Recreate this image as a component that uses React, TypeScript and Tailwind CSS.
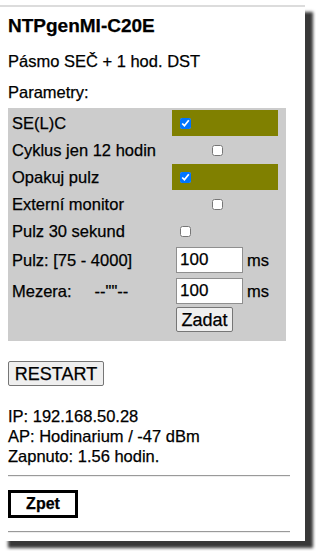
import React from 'react';

const font = { fontFamily: '"Liberation Sans", Arial, sans-serif' };

const Check: React.FC<{ checked?: boolean; className?: string }> = ({ checked, className }) => (
  <input
    type="checkbox"
    defaultChecked={checked}
    className={`m-0 h-[11px] w-[11px] ${className ?? ''}`}
  />
);

const Label: React.FC<{ children: React.ReactNode }> = ({ children }) => (
  <div className="flex items-center pl-[2px] whitespace-nowrap">{children}</div>
);

const App: React.FC = () => {
  return (
    <div className="min-h-[551px] bg-white pt-[5px] text-black [-webkit-text-stroke:0.25px_black]" style={font}>
      <div className="flex h-[536px] w-[305px] flex-col border-t-2 border-[#dcdcdc] bg-white pl-[8px] pt-[8px] shadow-[8px_7px_3px_rgba(0,0,0,0.78)]">
        <h1 className="text-[19px] font-bold leading-[22px]">NTPgenMI-C20E</h1>
        <p className="mt-[14px] text-[16.5px] leading-[20px]">Pásmo SEČ + 1 hod. DST</p>
        <p className="mt-[11px] text-[16.5px] leading-[20px]">Parametry:</p>

        <div className="mt-[6px] grid w-[278px] grid-cols-[160px_73px_31px] grid-rows-[26px_26px_26px_26px_26px_30px_30px_28px] gap-x-[2px] gap-y-[1px] bg-[#cccccc] pb-[6px] pl-[2px] pt-[2px] text-[16.5px] leading-[20px]">
          <Label>SE(L)C</Label>
          <div className="col-span-2 flex items-center bg-[#808000] pl-[8px]">
            <Check checked />
          </div>

          <Label>Cyklus jen 12 hodin</Label>
          <div className="col-span-2 flex items-center pl-[40px]">
            <Check />
          </div>

          <Label>Opakuj pulz</Label>
          <div className="col-span-2 flex items-center bg-[#808000] pl-[8px]">
            <Check checked />
          </div>

          <Label>Externí monitor</Label>
          <div className="col-span-2 flex items-center pl-[40px]">
            <Check />
          </div>

          <Label>Pulz 30 sekund</Label>
          <div className="col-span-2 flex items-center pl-[8px]">
            <Check />
          </div>

          <Label>Pulz: [75 - 4000]</Label>
          <div className="flex items-center pl-[4px]">
            <input
              defaultValue="100"
              className="h-[26px] w-[67px] border border-[#8f8f8f] bg-white px-[3px] text-[17px] outline-none"
            />
          </div>
          <div className="flex items-center">ms</div>

          <Label>
            Mezera:<span className="ml-[23px]">--""--</span>
          </Label>
          <div className="flex items-center pl-[4px]">
            <input
              defaultValue="100"
              className="h-[26px] w-[67px] border border-[#8f8f8f] bg-white px-[3px] text-[17px] outline-none"
            />
          </div>
          <div className="flex items-center">ms</div>

          <div />
          <div className="flex items-start pl-[4px]">
            <button className="h-[25px] w-[57px] rounded-[2px] border border-[#767676] bg-[#efefef] text-[18px] leading-[20px]">
              Zadat
            </button>
          </div>
          <div />
        </div>

        <button className="mt-[20px] h-[25px] w-[96px] rounded-[2px] border border-[#767676] bg-[#efefef] text-[18px] leading-[20px]">
          RESTART
        </button>

        <div className="mt-[20px] text-[16.5px] leading-[20px]">
          <p>IP: 192.168.50.28</p>
          <p>AP: Hodinarium / -47 dBm</p>
          <p>Zapnuto: 1.56 hodin.</p>
        </div>

        <div className="mt-[9px] w-[282px] border-b border-t border-b-[#eeeeee] border-t-[#9a9a9a]" />

        <button className="mt-[13px] h-[28px] w-[70px] border-[3px] border-black bg-white text-[16px] font-bold leading-[20px]">
          Zpet
        </button>

        <div className="mt-[13px] w-[282px] border-b border-t border-b-[#eeeeee] border-t-[#9a9a9a]" />
      </div>
    </div>
  );
};

export default App;
